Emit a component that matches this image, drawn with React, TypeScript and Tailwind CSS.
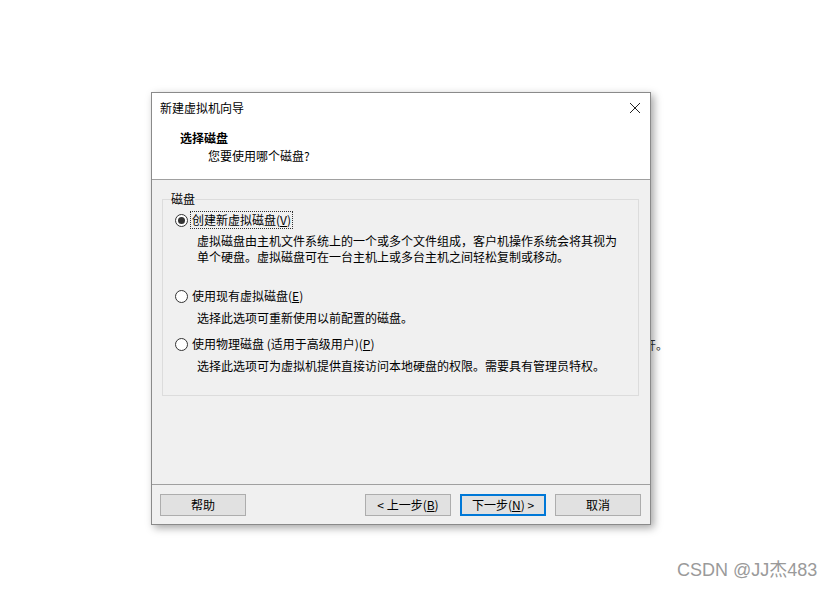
import React from "react";

const font = { fontFamily: '"Microsoft YaHei", "Noto Sans CJK SC", "Noto Sans", sans-serif' };

function Radio({ checked }: { checked?: boolean }) {
  return (
    <span className="w-[13px] h-[13px] rounded-full border border-[#333] bg-white flex items-center justify-center shrink-0">
      {checked && <span className="w-[7px] h-[7px] rounded-full bg-[#333]" />}
    </span>
  );
}

function Btn({ children, primary }: { children: React.ReactNode; primary?: boolean }) {
  return (
    <div
      className={
        "w-[86px] h-[22px] flex items-center justify-center text-[12px] text-black bg-[#e1e1e1] " +
        (primary ? "border-2 border-[#0078d7]" : "border border-[#adadad]")
      }
    >
      {children}
    </div>
  );
}

export default function App() {
  return (
    <div className="relative w-[835px] h-[589px] bg-white overflow-hidden pl-[151px] pt-[92px]" style={font}>
      <div className="absolute left-[644px] top-[337px] text-[12px] leading-[16px] text-[#333]">开。</div>

      <div className="relative w-[500px] h-[433px] border border-[#8a8a8a] bg-white flex flex-col shadow-[3px_3px_8px_rgba(0,0,0,0.35)]">
        {/* title + header */}
        <div className="h-[87px] bg-white border-b border-[#a0a0a0] flex flex-col">
          <div className="h-[29px] flex items-center justify-between pl-[8px] pr-[9px]">
            <span className="text-[12px] leading-[16px] text-black">新建虚拟机向导</span>
            <svg width="12" height="12" viewBox="0 0 12 12">
              <path d="M1 1L11 11M11 1L1 11" stroke="#222" strokeWidth="1" />
            </svg>
          </div>
          <div className="pl-[28px] pt-[8px] text-[12px] leading-[16px] font-bold text-black">选择磁盘</div>
          <div className="pl-[56px] pt-[2px] text-[12px] leading-[16px] text-black">您要使用哪个磁盘?</div>
        </div>

        {/* body */}
        <div className="flex-1 bg-[#f0f0f0] pt-[19px] pl-[10px] pr-[11px] border-b border-[#a0a0a0]">
          <div className="relative border border-[#dcdcdc] pt-[12px] pb-[22px] pl-[12px] text-[12px] text-black">
            <span className="absolute left-[8px] top-[-9px] bg-[#f0f0f0] leading-[16px] px-[0px]">磁盘</span>
            <div className="flex items-center h-[16px] leading-[16px]">
              <Radio checked />
              <span className="ml-[3px] px-[1px] outline outline-1 outline-dotted outline-[#333]">
                创建新虚拟磁盘(<span className="underline">V</span>)
              </span>
            </div>
            <div className="mt-[5px] pl-[22px] leading-[16px]">
              <div>虚拟磁盘由主机文件系统上的一个或多个文件组成，客户机操作系统会将其视为</div>
              <div>单个硬盘。虚拟磁盘可在一台主机上或多台主机之间轻松复制或移动。</div>
            </div>
            <div className="mt-[23px] flex items-center h-[16px] leading-[16px]">
              <Radio />
              <span className="ml-[4px]">
                使用现有虚拟磁盘(<span className="underline">E</span>)
              </span>
            </div>
            <div className="mt-[6px] pl-[22px] leading-[15px]">选择此选项可重新使用以前配置的磁盘。</div>
            <div className="mt-[11px] flex items-center h-[16px] leading-[16px]">
              <Radio />
              <span className="ml-[4px]">
                使用物理磁盘 (适用于高级用户)(<span className="underline">P</span>)
              </span>
            </div>
            <div className="mt-[6px] pl-[22px] leading-[15px]">选择此选项可为虚拟机提供直接访问本地硬盘的权限。需要具有管理员特权。</div>
          </div>
        </div>

        {/* footer */}
        <div className="h-[39px] bg-[#f0f0f0] flex items-start pt-[9px] pl-[8px] pr-[9px]">
          <Btn>帮助</Btn>
          <div className="flex-1" />
          <div className="flex gap-[9px]">
            <Btn>
              &lt; 上一步(<span className="underline">B</span>)
            </Btn>
            <Btn primary>
              下一步(<span className="underline">N</span>) &gt;
            </Btn>
            <Btn>取消</Btn>
          </div>
        </div>
      </div>

      <div
        className="absolute left-[677px] top-[558px] text-[18px] leading-[24px] text-[#9a9a9a]"
        style={{ fontFamily: '"Liberation Sans", "Noto Sans CJK SC", sans-serif' }}
      >
        CSDN @JJ杰483
      </div>
    </div>
  );
}
